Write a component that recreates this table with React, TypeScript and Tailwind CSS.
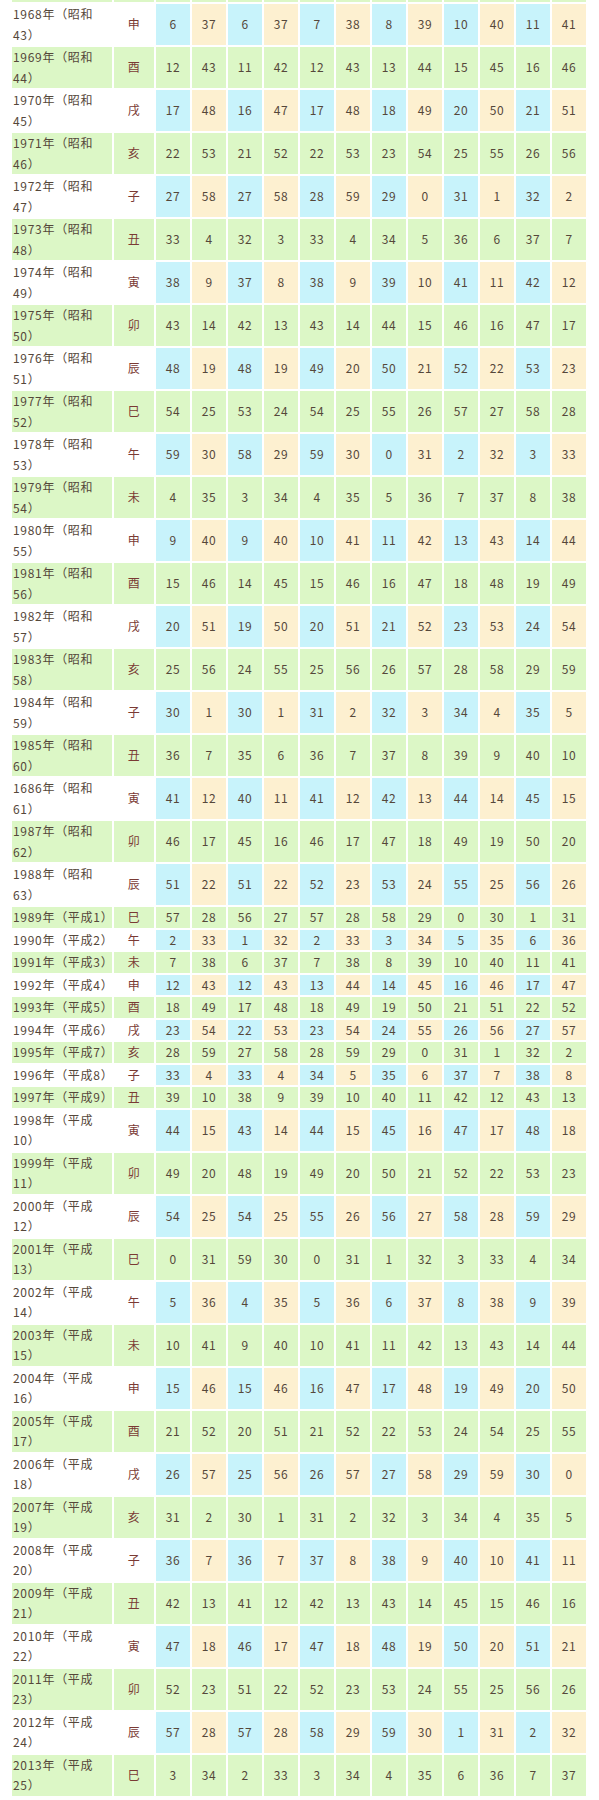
import React from "react";

// Each line: year label | era | era number | 干支 | twelve numbers
// (the 1986 row really is labelled "1686" in the source table).
// The first line is the row above the crop: only its bottom edge shows.
const DATA = `1967|昭和|42|未|1 32 0 31 1 32 2 33 4 34 5 35
1968|昭和|43|申|6 37 6 37 7 38 8 39 10 40 11 41
1969|昭和|44|酉|12 43 11 42 12 43 13 44 15 45 16 46
1970|昭和|45|戌|17 48 16 47 17 48 18 49 20 50 21 51
1971|昭和|46|亥|22 53 21 52 22 53 23 54 25 55 26 56
1972|昭和|47|子|27 58 27 58 28 59 29 0 31 1 32 2
1973|昭和|48|丑|33 4 32 3 33 4 34 5 36 6 37 7
1974|昭和|49|寅|38 9 37 8 38 9 39 10 41 11 42 12
1975|昭和|50|卯|43 14 42 13 43 14 44 15 46 16 47 17
1976|昭和|51|辰|48 19 48 19 49 20 50 21 52 22 53 23
1977|昭和|52|巳|54 25 53 24 54 25 55 26 57 27 58 28
1978|昭和|53|午|59 30 58 29 59 30 0 31 2 32 3 33
1979|昭和|54|未|4 35 3 34 4 35 5 36 7 37 8 38
1980|昭和|55|申|9 40 9 40 10 41 11 42 13 43 14 44
1981|昭和|56|酉|15 46 14 45 15 46 16 47 18 48 19 49
1982|昭和|57|戌|20 51 19 50 20 51 21 52 23 53 24 54
1983|昭和|58|亥|25 56 24 55 25 56 26 57 28 58 29 59
1984|昭和|59|子|30 1 30 1 31 2 32 3 34 4 35 5
1985|昭和|60|丑|36 7 35 6 36 7 37 8 39 9 40 10
1686|昭和|61|寅|41 12 40 11 41 12 42 13 44 14 45 15
1987|昭和|62|卯|46 17 45 16 46 17 47 18 49 19 50 20
1988|昭和|63|辰|51 22 51 22 52 23 53 24 55 25 56 26
1989|平成|1|巳|57 28 56 27 57 28 58 29 0 30 1 31
1990|平成|2|午|2 33 1 32 2 33 3 34 5 35 6 36
1991|平成|3|未|7 38 6 37 7 38 8 39 10 40 11 41
1992|平成|4|申|12 43 12 43 13 44 14 45 16 46 17 47
1993|平成|5|酉|18 49 17 48 18 49 19 50 21 51 22 52
1994|平成|6|戌|23 54 22 53 23 54 24 55 26 56 27 57
1995|平成|7|亥|28 59 27 58 28 59 29 0 31 1 32 2
1996|平成|8|子|33 4 33 4 34 5 35 6 37 7 38 8
1997|平成|9|丑|39 10 38 9 39 10 40 11 42 12 43 13
1998|平成|10|寅|44 15 43 14 44 15 45 16 47 17 48 18
1999|平成|11|卯|49 20 48 19 49 20 50 21 52 22 53 23
2000|平成|12|辰|54 25 54 25 55 26 56 27 58 28 59 29
2001|平成|13|巳|0 31 59 30 0 31 1 32 3 33 4 34
2002|平成|14|午|5 36 4 35 5 36 6 37 8 38 9 39
2003|平成|15|未|10 41 9 40 10 41 11 42 13 43 14 44
2004|平成|16|申|15 46 15 46 16 47 17 48 19 49 20 50
2005|平成|17|酉|21 52 20 51 21 52 22 53 24 54 25 55
2006|平成|18|戌|26 57 25 56 26 57 27 58 29 59 30 0
2007|平成|19|亥|31 2 30 1 31 2 32 3 34 4 35 5
2008|平成|20|子|36 7 36 7 37 8 38 9 40 10 41 11
2009|平成|21|丑|42 13 41 12 42 13 43 14 45 15 46 16
2010|平成|22|寅|47 18 46 17 47 18 48 19 50 20 51 21
2011|平成|23|卯|52 23 51 22 52 23 53 24 55 25 56 26
2012|平成|24|辰|57 28 57 28 58 29 59 30 1 31 2 32
2013|平成|25|巳|3 34 2 33 3 34 4 35 6 36 7 37`;

type Row = {
  year: string;
  era: string;
  eraNum: string;
  kan: string;
  nums: string[];
  odd: boolean;
  offscreen: boolean;
};

const rows: Row[] = DATA.split("\n").map((line, i) => {
  const [year, era, eraNum, kan, nums] = line.split("|");
  return {
    year,
    era,
    eraNum,
    kan,
    nums: nums.split(" "),
    odd: i % 2 === 0,
    offscreen: i === 0,
  };
});

const GREEN = "bg-[#dcf7c6]";
const BLUE = "bg-[#c8f3fb]";
const BEIGE = "bg-[#fdf0d0]";

function YearCell({ row }: { row: Row }) {
  const bg = row.odd ? GREEN : "bg-white";
  // the row above the crop keeps its height but shows no text
  if (row.offscreen) return <td className={`h-[41px] p-0 ${bg}`} />;
  const twoLine = row.eraNum.length > 1;
  return (
    <td
      className={`whitespace-nowrap pl-[1px] text-left tracking-[0.7px] ${bg}`}
    >
      {row.year}年（{row.era}
      {twoLine && <br />}
      {row.eraNum}）
    </td>
  );
}

export default function App() {
  return (
    <div className="min-h-screen overflow-hidden bg-white">
      <table className="-mt-[41px] ml-[10px] w-[578px] table-fixed border-separate border-spacing-[2px] font-['Noto_Sans_CJK_JP','Noto_Sans',sans-serif] text-[12px] leading-[20.5px] tracking-[0.5px] text-[#55473a]">
        <colgroup>
          <col className="w-[100px]" />
          <col className="w-[40px]" />
          {Array.from({ length: 12 }, (_, i) => (
            <col key={i} className="w-[34px]" />
          ))}
        </colgroup>
        <tbody>
          {rows.map((row) => (
            <tr key={row.year + row.eraNum}>
              <YearCell row={row} />
              <td
                className={`p-0 text-center text-[#7a3a34] ${row.odd ? GREEN : "bg-white"}`}
              >
                {!row.offscreen && row.kan}
              </td>
              {row.nums.map((n, j) => (
                <td
                  key={j}
                  className={`p-0 text-center ${row.odd ? GREEN : j % 2 === 0 ? BLUE : BEIGE}`}
                >
                  {!row.offscreen && n}
                </td>
              ))}
            </tr>
          ))}
        </tbody>
      </table>
    </div>
  );
}
